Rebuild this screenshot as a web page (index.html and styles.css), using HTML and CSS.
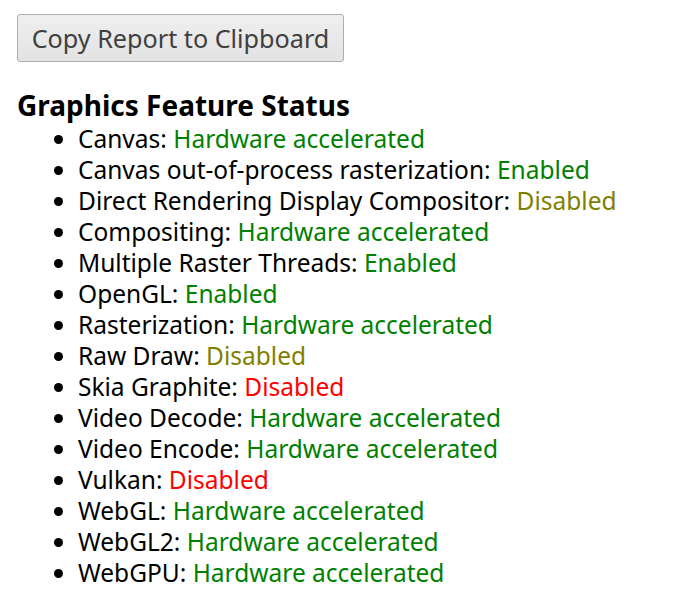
FILE: index.html
```html
<!DOCTYPE html>
<html>
<head>
<meta charset="utf-8">
<link rel="stylesheet" href="styles.css">
</head>
<body>
<div class="page">
  <button class="copy-btn">Copy Report to Clipboard</button>
  <h3 class="section-title">Graphics Feature Status</h3>
  <ul class="feature-list">
    <li>Canvas: <span class="ok">Hardware accelerated</span></li>
    <li>Canvas out-of-process rasterization: <span class="ok">Enabled</span></li>
    <li>Direct Rendering Display Compositor: <span class="warn">Disabled</span></li>
    <li>Compositing: <span class="ok">Hardware accelerated</span></li>
    <li>Multiple Raster Threads: <span class="ok">Enabled</span></li>
    <li>OpenGL: <span class="ok">Enabled</span></li>
    <li>Rasterization: <span class="ok">Hardware accelerated</span></li>
    <li>Raw Draw: <span class="warn">Disabled</span></li>
    <li>Skia Graphite: <span class="off">Disabled</span></li>
    <li>Video Decode: <span class="ok">Hardware accelerated</span></li>
    <li>Video Encode: <span class="ok">Hardware accelerated</span></li>
    <li>Vulkan: <span class="off">Disabled</span></li>
    <li>WebGL: <span class="ok">Hardware accelerated</span></li>
    <li>WebGL2: <span class="ok">Hardware accelerated</span></li>
    <li>WebGPU: <span class="ok">Hardware accelerated</span></li>
  </ul>
</div>
</body>
</html>
```
FILE: styles.css
```css
html, body {
  margin: 0;
  padding: 0;
  background: #fff;
}
body {
  font-family: "Noto Sans", "Open Sans", sans-serif;
  color: #000;
}
.page {
  padding: 14px 0 0 17px;
}
.copy-btn {
  display: block;
  box-sizing: border-box;
  width: 327px;
  height: 48px;
  margin: 0;
  padding: 0;
  font-family: inherit;
  font-size: 25.2px;
  color: #404040;
  background: linear-gradient(#efefef, #e3e3e3);
  border: 1px solid #adadad;
  border-radius: 3px;
}
.section-title {
  margin: 26px 0 0 0;
  font-size: 28px;
  line-height: 34px;
  font-weight: bold;
}
.feature-list {
  margin: 0;
  padding: 1px 0 0 61px;
  font-size: 24.5px;
  line-height: 31px;
}
.ok { color: #008000; }
.warn { color: #808000; }
.off { color: #ff0000; }
```
